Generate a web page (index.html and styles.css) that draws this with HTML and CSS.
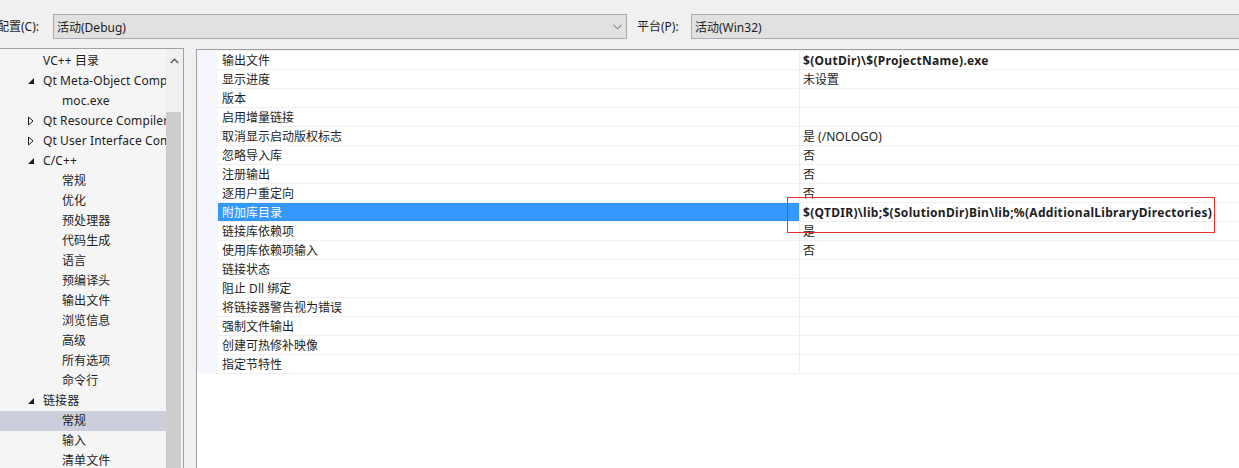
FILE: index.html
```html
<!DOCTYPE html>
<html lang="zh-CN">
<head>
  <meta charset="UTF-8">
  <title>属性页</title>
  <link rel="stylesheet" href="styles.css">
</head>
<body>
  <div class="toolbar">
    <span class="lbl lbl-cfg">配置(C):</span>
    <div class="combo combo-cfg">
      <span>活动(Debug)</span>
      <svg class="chev" width="9" height="6" viewBox="0 0 9 6"><path d="M0.5 0.8 L4.5 4.8 L8.5 0.8" fill="none" stroke="#606060" stroke-width="1"/></svg>
    </div>
    <span class="lbl lbl-plat">平台(P):</span>
    <div class="combo combo-plat">
      <span>活动(Win32)</span>
    </div>
  </div>

  <div class="main">
    <div class="tree-panel">
      <ul class="tree">
        <li class="lv1">VC++ 目录</li>
        <li class="lv1"><svg class="tg" width="6" height="6" viewBox="0 0 6 6"><path d="M6 0 L6 6 L0 6 Z" fill="#1e1e1e"/></svg>Qt Meta-Object Compiler</li>
        <li class="lv2">moc.exe</li>
        <li class="lv1"><svg class="tg" width="6" height="9" viewBox="0 0 6 9"><path d="M0.5 0.5 L5 4.5 L0.5 8.5 Z" fill="none" stroke="#1e1e1e" stroke-width="1"/></svg>Qt Resource Compiler</li>
        <li class="lv1"><svg class="tg" width="6" height="9" viewBox="0 0 6 9"><path d="M0.5 0.5 L5 4.5 L0.5 8.5 Z" fill="none" stroke="#1e1e1e" stroke-width="1"/></svg>Qt User Interface Compiler</li>
        <li class="lv1"><svg class="tg" width="6" height="6" viewBox="0 0 6 6"><path d="M6 0 L6 6 L0 6 Z" fill="#1e1e1e"/></svg>C/C++</li>
        <li class="lv2">常规</li>
        <li class="lv2">优化</li>
        <li class="lv2">预处理器</li>
        <li class="lv2">代码生成</li>
        <li class="lv2">语言</li>
        <li class="lv2">预编译头</li>
        <li class="lv2">输出文件</li>
        <li class="lv2">浏览信息</li>
        <li class="lv2">高级</li>
        <li class="lv2">所有选项</li>
        <li class="lv2">命令行</li>
        <li class="lv1"><svg class="tg" width="6" height="6" viewBox="0 0 6 6"><path d="M6 0 L6 6 L0 6 Z" fill="#1e1e1e"/></svg>链接器</li>
        <li class="lv2 active">常规</li>
        <li class="lv2">输入</li>
        <li class="lv2">清单文件</li>
      </ul>
      <div class="vscroll">
        <div class="vs-btn">
          <svg width="9" height="6" viewBox="0 0 9 6"><path d="M0.8 5 L4.5 1.3 L8.2 5" fill="none" stroke="#606060" stroke-width="1.6"/></svg>
        </div>
        <div class="vs-thumb"></div>
      </div>
    </div>

    <div class="grid-panel">
      <div class="grid">
        <div class="gutter"></div>
        <div class="rows">
          <div class="row"><div class="name">输出文件</div><div class="val bold">$(OutDir)\$(ProjectName).exe</div></div>
          <div class="row"><div class="name">显示进度</div><div class="val">未设置</div></div>
          <div class="row"><div class="name">版本</div><div class="val"></div></div>
          <div class="row"><div class="name">启用增量链接</div><div class="val"></div></div>
          <div class="row"><div class="name">取消显示启动版权标志</div><div class="val">是 (/NOLOGO)</div></div>
          <div class="row"><div class="name">忽略导入库</div><div class="val">否</div></div>
          <div class="row"><div class="name">注册输出</div><div class="val">否</div></div>
          <div class="row"><div class="name">逐用户重定向</div><div class="val">否</div></div>
          <div class="row selected"><div class="name">附加库目录</div><div class="val bold">$(QTDIR)\lib;$(SolutionDir)Bin\lib;%(AdditionalLibraryDirectories)</div></div>
          <div class="row"><div class="name">链接库依赖项</div><div class="val">是</div></div>
          <div class="row"><div class="name">使用库依赖项输入</div><div class="val">否</div></div>
          <div class="row"><div class="name">链接状态</div><div class="val"></div></div>
          <div class="row"><div class="name">阻止 Dll 绑定</div><div class="val"></div></div>
          <div class="row"><div class="name">将链接器警告视为错误</div><div class="val"></div></div>
          <div class="row"><div class="name">强制文件输出</div><div class="val"></div></div>
          <div class="row"><div class="name">创建可热修补映像</div><div class="val"></div></div>
          <div class="row"><div class="name">指定节特性</div><div class="val"></div></div>
        </div>
      </div>
      <div class="mark"></div>
    </div>
  </div>
</body>
</html>
```

FILE: styles.css
```css
*{
  margin:0;
  padding:0;
  box-sizing: border-box;
}
li{
  list-style: none;
}
html,body{
  width: 1239px;
  height: 468px;
  overflow: hidden;
}
body{
  background-color: #f0f0f0;
  font-family: "Noto Sans", "Noto Sans CJK SC", sans-serif;
  font-size: 12px;
  color: #1e1e1e;
}

/* top bar */
.toolbar{
  display: flex;
  align-items: flex-start;
  height: 48px;
  padding-top: 14px;
}
.lbl{
  line-height: 25px;
  white-space: nowrap;
}
.lbl-cfg{
  margin-left: -3px;
  width: 56px;
}
.lbl-plat{
  margin-left: 10px;
  width: 54px;
}
.combo{
  display: flex;
  align-items: center;
  height: 25px;
  padding-left: 3px;
  background-color: #e1e1e1;
  border: 1px solid #adadad;
}
.combo-cfg{
  width: 574px;
}
.combo-cfg span{
  flex: 1;
}
.chev{
  margin-right: 4px;
}
.combo-plat{
  flex: 1;
  margin-right: -10px;
}

.main{
  display: flex;
  align-items: flex-start;
  height: 420px;
  overflow: hidden;
}

/* left tree */
.tree-panel{
  display: flex;
  width: 184px;
  height: 420px;
  background-color: #f5f5f5;
  border-top: 1px solid #a0a0a0;
  border-right: 1px solid #a0a0a0;
}
.tree{
  width: 166px;
  padding-top: 2px;
  overflow: hidden;
}
.tree li{
  position: relative;
  height: 20px;
  line-height: 20px;
  white-space: nowrap;
  overflow: hidden;
  letter-spacing: 0.1px;
}
.tree .lv1{
  padding-left: 43px;
}
.tree .lv2{
  padding-left: 62px;
}
.tree .active{
  background-color: #cccedb;
}
.tg{
  position: absolute;
  left: 28px;
  top: 50%;
  transform: translateY(-50%);
}
.vscroll{
  width: 17px;
  background-color: #f0f0f0;
  overflow: hidden;
}
.vs-btn{
  display: flex;
  align-items: center;
  justify-content: center;
  height: 23px;
}
.vs-thumb{
  margin-top: 40px;
  margin-right: 2px;
  height: 360px;
  background-color: #cdcdcd;
}

/* property grid */
.grid-panel{
  position: relative;
  flex: 1;
  margin-top: 1px;
  margin-left: 12px;
  margin-right: -10px;
  height: 419px;
  background-color: #fff;
  border-top: 1px solid #a0a0a0;
  border-left: 1px solid #a0a0a0;
}
.grid{
  display: flex;
}
.gutter{
  width: 21px;
  background-color: #f5f7fc;
}
.rows{
  flex: 1;
  border-bottom: 1px solid #f0f0f0;
}
.row{
  display: flex;
  height: 19px;
  border-top: 1px solid #f0f0f0;
}
.name{
  width: 581px;
  padding-left: 4px;
  padding-top: 2px;
  line-height: 16px;
  white-space: nowrap;
}
.val{
  flex: 1;
  padding-left: 3px;
  padding-top: 2px;
  line-height: 16px;
  border-left: 1px solid #f0f0f0;
  white-space: nowrap;
}
.bold{
  font-weight: bold;
  letter-spacing: 0.3px;
}
.selected .name{
  background-color: #3399ff;
  color: #fff;
}
.mark{
  position: absolute;
  left: 590px;
  top: 147px;
  width: 428px;
  height: 36px;
  border: 1px solid #e5302c;
}
```
